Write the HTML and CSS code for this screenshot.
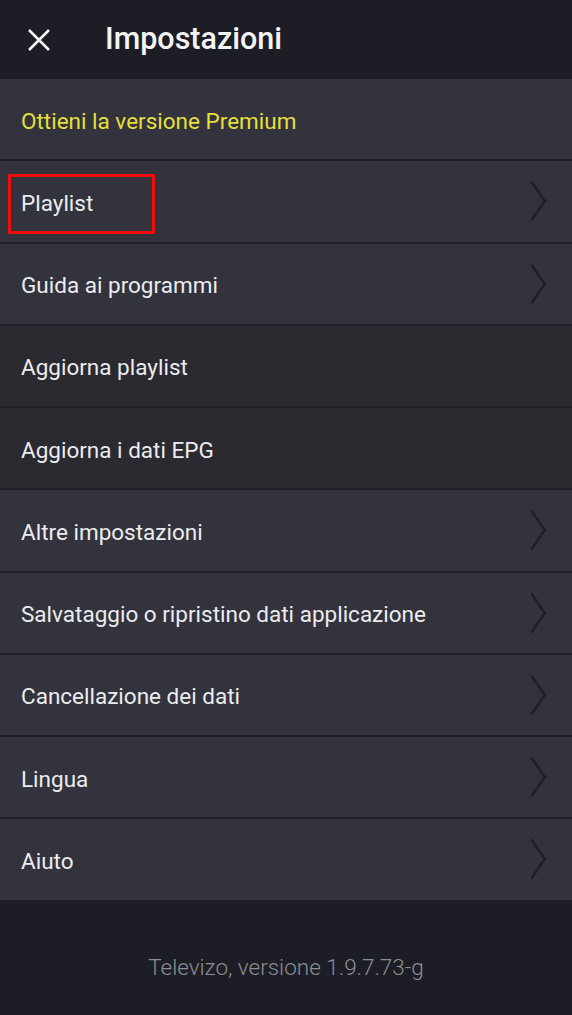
FILE: index.html
```html
<!DOCTYPE html>
<html>
<head>
  <title>Impostazioni</title>
  <link rel="stylesheet" href="styles.css">
</head>
<body>
  <div class="screen">
    <div class="toolbar">
      <svg class="close" width="24" height="24" viewBox="0 0 24 24">
        <path d="M2 2 L22 22 M22 2 L2 22" stroke="#f2f2f2" stroke-width="2.6" fill="none"/>
      </svg>
      <h1>Impostazioni</h1>
    </div>

    <div class="list">
      <div class="row premium"><span>Ottieni la versione Premium</span></div>
      <div class="row marked"><span>Playlist</span><i class="chev"></i></div>
      <div class="row"><span>Guida ai programmi</span><i class="chev"></i></div>
      <div class="row flat"><span>Aggiorna playlist</span></div>
      <div class="row flat"><span>Aggiorna i dati EPG</span></div>
      <div class="row"><span>Altre impostazioni</span><i class="chev"></i></div>
      <div class="row"><span>Salvataggio o ripristino dati applicazione</span><i class="chev"></i></div>
      <div class="row"><span>Cancellazione dei dati</span><i class="chev"></i></div>
      <div class="row"><span>Lingua</span><i class="chev"></i></div>
      <div class="row"><span>Aiuto</span><i class="chev"></i></div>
    </div>

    <div class="footer">Televizo, versione 1.9.7.73-g</div>
  </div>
</body>
</html>
```

FILE: styles.css
```css
body {
  margin: 0;
  padding: 0;
  background: #1d1d25;
  font-family: Roboto, 'Noto Sans', sans-serif;
}
.screen {
  width: 572px;
  height: 1015px;
  display: flex;
  flex-direction: column;
  background: #1d1d25;
}
.toolbar {
  height: 79px;
  display: flex;
  align-items: center;
  padding-left: 27px;
  box-sizing: border-box;
}
.close {
  display: block;
}
.toolbar h1 {
  margin: 0 0 2px 54px;
  font-size: 30.5px;
  font-weight: 500;
  color: #f4f4f4;
}
.list {
  display: flex;
  flex-direction: column;
}
.row {
  height: 77.25px;
  border-bottom: 2px solid #1f1f26;
  background: #32333d;
  display: flex;
  align-items: center;
  justify-content: space-between;
  padding: 3px 24px 0 21px;
  font-size: 22.5px;
  color: #ececee;
}
.row.flat {
  background: #2a2a30;
}
.row.premium {
  color: #e6df3c;
}
.row.marked {
  position: relative;
}
.row.marked::after {
  content: '';
  position: absolute;
  left: 8px;
  top: 13px;
  width: 147px;
  height: 60px;
  box-sizing: border-box;
  border: 3px solid #f20d0d;
}
.chev {
  width: 18px;
  height: 18px;
  margin: -3px 6px 0 0;
  border-top: 2px solid #1d1d25;
  border-right: 2px solid #1d1d25;
  transform: scaleY(1.45) rotate(45deg);
}
.footer {
  flex: 1;
  display: flex;
  align-items: center;
  justify-content: center;
  font-size: 22.5px;
  font-weight: 300;
  color: #8d8d93;
  padding-top: 18px;
}
```
